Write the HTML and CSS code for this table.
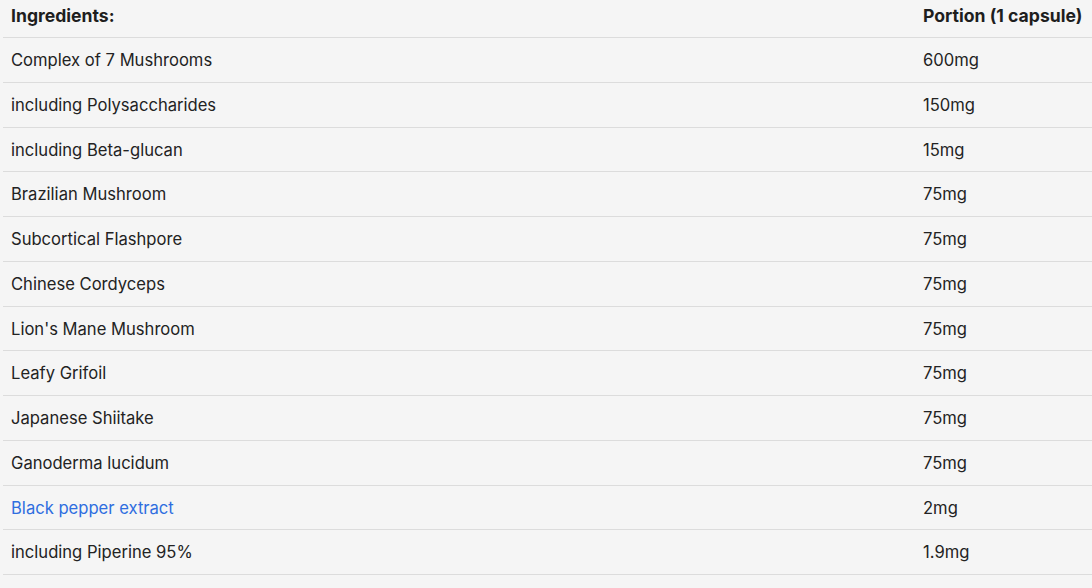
FILE: index.html
```html
<!DOCTYPE html>
<html lang="en">
<head>
<meta charset="utf-8">
<title>Ingredients</title>
<link rel="stylesheet" href="styles.css">
</head>
<body>
<table class="ingredients">
  <thead>
    <tr><th class="name">Ingredients:</th><th class="portion">Portion (1 capsule)</th></tr>
  </thead>
  <tbody>
    <tr><td>Complex of 7 Mushrooms</td><td>600mg</td></tr>
    <tr><td>including Polysaccharides</td><td>150mg</td></tr>
    <tr><td>including Beta-glucan</td><td>15mg</td></tr>
    <tr><td>Brazilian Mushroom</td><td>75mg</td></tr>
    <tr><td>Subcortical Flashpore</td><td>75mg</td></tr>
    <tr><td>Chinese Cordyceps</td><td>75mg</td></tr>
    <tr><td>Lion's Mane Mushroom</td><td>75mg</td></tr>
    <tr><td>Leafy Grifoil</td><td>75mg</td></tr>
    <tr><td>Japanese Shiitake</td><td>75mg</td></tr>
    <tr><td>Ganoderma lucidum</td><td>75mg</td></tr>
    <tr><td><a class="link" href="#">Black pepper extract</a></td><td>2mg</td></tr>
    <tr><td>including Piperine 95%</td><td>1.9mg</td></tr>
  </tbody>
</table>
</body>
</html>
```

FILE: styles.css
```css
html, body {
  margin: 0;
  padding: 0;
  background: #f5f5f5;
}
body {
  font-family: "Inter", "Noto Sans", sans-serif;
  font-size: 16.6px;
  color: #232323;
  padding-left: 3px;
}
.ingredients {
  border-collapse: collapse;
  width: 1089px;
  table-layout: fixed;
}
.ingredients th,
.ingredients td {
  text-align: left;
  padding: 11px 8px 9px 8px;
  line-height: 23.75px;
  height: 23.75px;
  border-bottom: 1px solid #dcdcdc;
  white-space: nowrap;
}
.ingredients th {
  font-weight: 700;
  font-size: 17.6px;
  color: #1e1e1e;
  padding-top: 4px;
  padding-bottom: 9px;
  height: 24px;
}
.ingredients .name { width: 896px; }
.ingredients td:first-child { width: 896px; }
.link {
  color: #2f6ee0;
  text-decoration: none;
}
```
